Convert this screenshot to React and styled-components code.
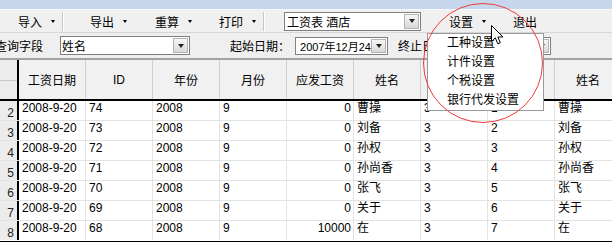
import styled, { createGlobalStyle } from "styled-components";

const GlobalStyle = createGlobalStyle`
  html, body {
    margin: 0;
    padding: 0;
  }
  body {
    width: 612px;
    height: 251px;
    overflow: hidden;
    background: #fff;
    color: #000;
    font-family: "Liberation Sans", "Noto Sans CJK SC", sans-serif;
    font-size: 12px;
  }
`;

const Screen = styled.div`
  position: relative;
  width: 612px;
  height: 251px;
  overflow: hidden;
  background: #fff;
`;

const TitleStrip = styled.div`
  height: 9px;
  background: #c6d7ed;
  border-bottom: 1px solid #f4f7fb;
`;

const Toolbar = styled.div`
  display: flex;
  align-items: center;
  height: 22px;
  background: #f0f0f0;
  border-bottom: 1px solid #d6d6d6;
`;

const ToolButton = styled.div`
  display: flex;
  align-items: center;
  justify-content: flex-end;
  gap: 9px;
  box-sizing: border-box;
  width: ${(p) => p.$w}px;
  height: 100%;
  padding-right: 7px;
  white-space: nowrap;
`;

const Caret = styled.span`
  width: 0;
  height: 0;
  border-left: 2.5px solid transparent;
  border-right: 2.5px solid transparent;
  border-top: 3px solid #000;
`;

const ToolSep = styled.div`
  width: 0;
  height: 19px;
  border-left: 1px solid #c6c6c6;
  border-right: 1px solid #fff;
  margin-right: ${(p) => p.$after || 0}px;
`;

const Combo = styled.div`
  display: flex;
  align-items: center;
  box-sizing: border-box;
  width: ${(p) => p.$w}px;
  height: ${(p) => p.$h || 19}px;
  margin-left: ${(p) => p.$ml || 0}px;
  padding-left: ${(p) => p.$pl || 2}px;
  background: #fff;
  border: 1px solid #7f7f7f;
  font-size: ${(p) => p.$fs || 12}px;
  white-space: nowrap;
`;

const ComboText = styled.span`
  flex: 1;
  overflow: hidden;
`;

const DropBtn = styled.span`
  display: flex;
  align-items: center;
  justify-content: center;
  box-sizing: border-box;
  width: 15px;
  height: calc(100% - 2px);
  margin-right: 1px;
  background: linear-gradient(#f6f6f6, #d9d9d9);
  border: 1px solid #b4b4b4;

  &::after {
    content: "";
    border-left: 3.5px solid transparent;
    border-right: 3.5px solid transparent;
    border-top: 4px solid #222;
  }
`;

const FilterBar = styled.div`
  display: flex;
  align-items: center;
  height: 25px;
  background: #efefef;
`;

const Label = styled.span`
  margin-left: ${(p) => p.$ml || 0}px;
  white-space: nowrap;
`;

const Grid = styled.div`
  border-top: 2px solid #a3a3a3;
  border-bottom: 1px solid #000;
`;

const Row = styled.div`
  display: grid;
  grid-template-columns: 19px repeat(9, 67px);
  box-sizing: border-box;
  height: ${(p) => (p.$head ? 41 : 20)}px;
  border-bottom: ${(p) => (p.$head ? "2px solid #000" : "1px solid #e3e3e3")};

  &:last-child {
    border-bottom-color: transparent;
  }
`;

const Corner = styled.div`
  position: relative;
  background: #ececec;
  border-right: 2px solid #000;

  &::after {
    content: "";
    position: absolute;
    left: 0;
    right: 0;
    top: 20px;
    border-top: 1px solid #c8c8c8;
  }
`;

const HeadCell = styled.div`
  display: flex;
  align-items: center;
  justify-content: center;
  background: #f1f1f1;
  border-right: 1px solid #cfcfcf;
  white-space: nowrap;
`;

const RowNum = styled.div`
  box-sizing: border-box;
  padding: 5px 3px 0 0;
  text-align: right;
  line-height: 14px;
  color: #222;
  background: #ececec;
  border-right: 2px solid #000;
`;

const Cell = styled.div`
  box-sizing: border-box;
  padding: 0 ${(p) => (p.$right ? 2 : 3)}px 0 3px;
  text-align: ${(p) => (p.$right ? "right" : "left")};
  line-height: 15px;
  border-right: 1px solid #e3e3e3;
  white-space: nowrap;
  overflow: hidden;
`;

const Menu = styled.div`
  position: absolute;
  left: 427px;
  top: 33px;
  box-sizing: border-box;
  width: 117px;
  height: 78px;
  background: #fff;
  border: 1px solid #9a9a9a;
`;

const MenuItem = styled.div`
  height: 19px;
  line-height: 19px;
  padding-left: 19px;
  white-space: nowrap;
`;

const Ring = styled.div`
  position: absolute;
  left: 423px;
  top: 3px;
  width: 120px;
  height: 120px;
  box-sizing: border-box;
  border: 1px solid #f23a3a;
  border-radius: 50%;
  pointer-events: none;
`;

const Pointer = styled.svg`
  position: absolute;
  left: 491px;
  top: 25px;
`;

// the two middle headers sit under the open menu
const headers = ["工资日期", "ID", "年份", "月份", "应发工资", "姓名", "", "", "姓名"];

const rows = [
  [2, "74", "0", "曹操", "1"],
  [3, "73", "0", "刘备", "2"],
  [4, "72", "0", "孙权", "3"],
  [5, "71", "0", "孙尚香", "4"],
  [6, "70", "0", "张飞", "5"],
  [7, "69", "0", "关于", "6"],
  [8, "68", "10000", "在", "7"],
];

const menuItems = ["工种设置", "计件设置", "个税设置", "银行代发设置"];

function ToolDrop({ w, label, caret = true }) {
  return (
    <ToolButton $w={w}>
      {label}
      {caret && <Caret />}
    </ToolButton>
  );
}

export default function App() {
  return (
    <>
      <GlobalStyle />
      <Screen>
        <TitleStrip />
        <Toolbar>
          <ToolDrop w={62} label="导入" />
          <ToolSep />
          <ToolDrop w={70} label="导出" />
          <ToolDrop w={65} label="重算" />
          <ToolDrop w={64} label="打印" />
          <ToolSep $after={19} />
          <Combo $w={137}>
            <ComboText>工资表 酒店</ComboText>
            <DropBtn />
          </Combo>
          <ToolDrop w={72} label="设置" />
          <ToolDrop w={51} label="退出" caret={false} />
        </Toolbar>

        <FilterBar>
          <Label $ml={-5}>查询字段</Label>
          <Combo $w={130} $ml={17} $pl={1}>
            <ComboText>姓名</ComboText>
            <DropBtn />
          </Combo>
          <Label $ml={40}>起始日期：</Label>
          <Combo $w={93} $ml={5} $pl={4} $fs={11} $h={18}>
            <ComboText>2007年12月24</ComboText>
            <DropBtn />
          </Combo>
          <Label $ml={10}>终止日期：</Label>
          <Combo $w={93} $pl={4} $fs={11} $h={18}>
            <ComboText>2008年9月20</ComboText>
            <DropBtn />
          </Combo>
        </FilterBar>

        <Grid>
          <Row $head>
            <Corner />
            {headers.map((h, i) => (
              <HeadCell key={i}>{h}</HeadCell>
            ))}
          </Row>
          {rows.map(([n, id, pay, name, seq]) => (
            <Row key={n}>
              <RowNum>{n}</RowNum>
              <Cell>2008-9-20</Cell>
              <Cell>{id}</Cell>
              <Cell>2008</Cell>
              <Cell>9</Cell>
              <Cell $right>{pay}</Cell>
              <Cell>{name}</Cell>
              <Cell>3</Cell>
              <Cell>{seq}</Cell>
              <Cell>{name}</Cell>
            </Row>
          ))}
        </Grid>

        <Menu>
          {menuItems.map((m) => (
            <MenuItem key={m}>{m}</MenuItem>
          ))}
        </Menu>

        <Ring />

        <Pointer width="13" height="21" viewBox="0 0 13 21">
          <path
            d="M0.5 0.5 L0.5 16.5 L4.3 12.8 L6.8 18.8 L9.3 17.8 L6.9 12 L12 12 Z"
            fill="#fff"
            stroke="#000"
            strokeWidth="1"
            strokeLinejoin="miter"
          />
        </Pointer>
      </Screen>
    </>
  );
}
